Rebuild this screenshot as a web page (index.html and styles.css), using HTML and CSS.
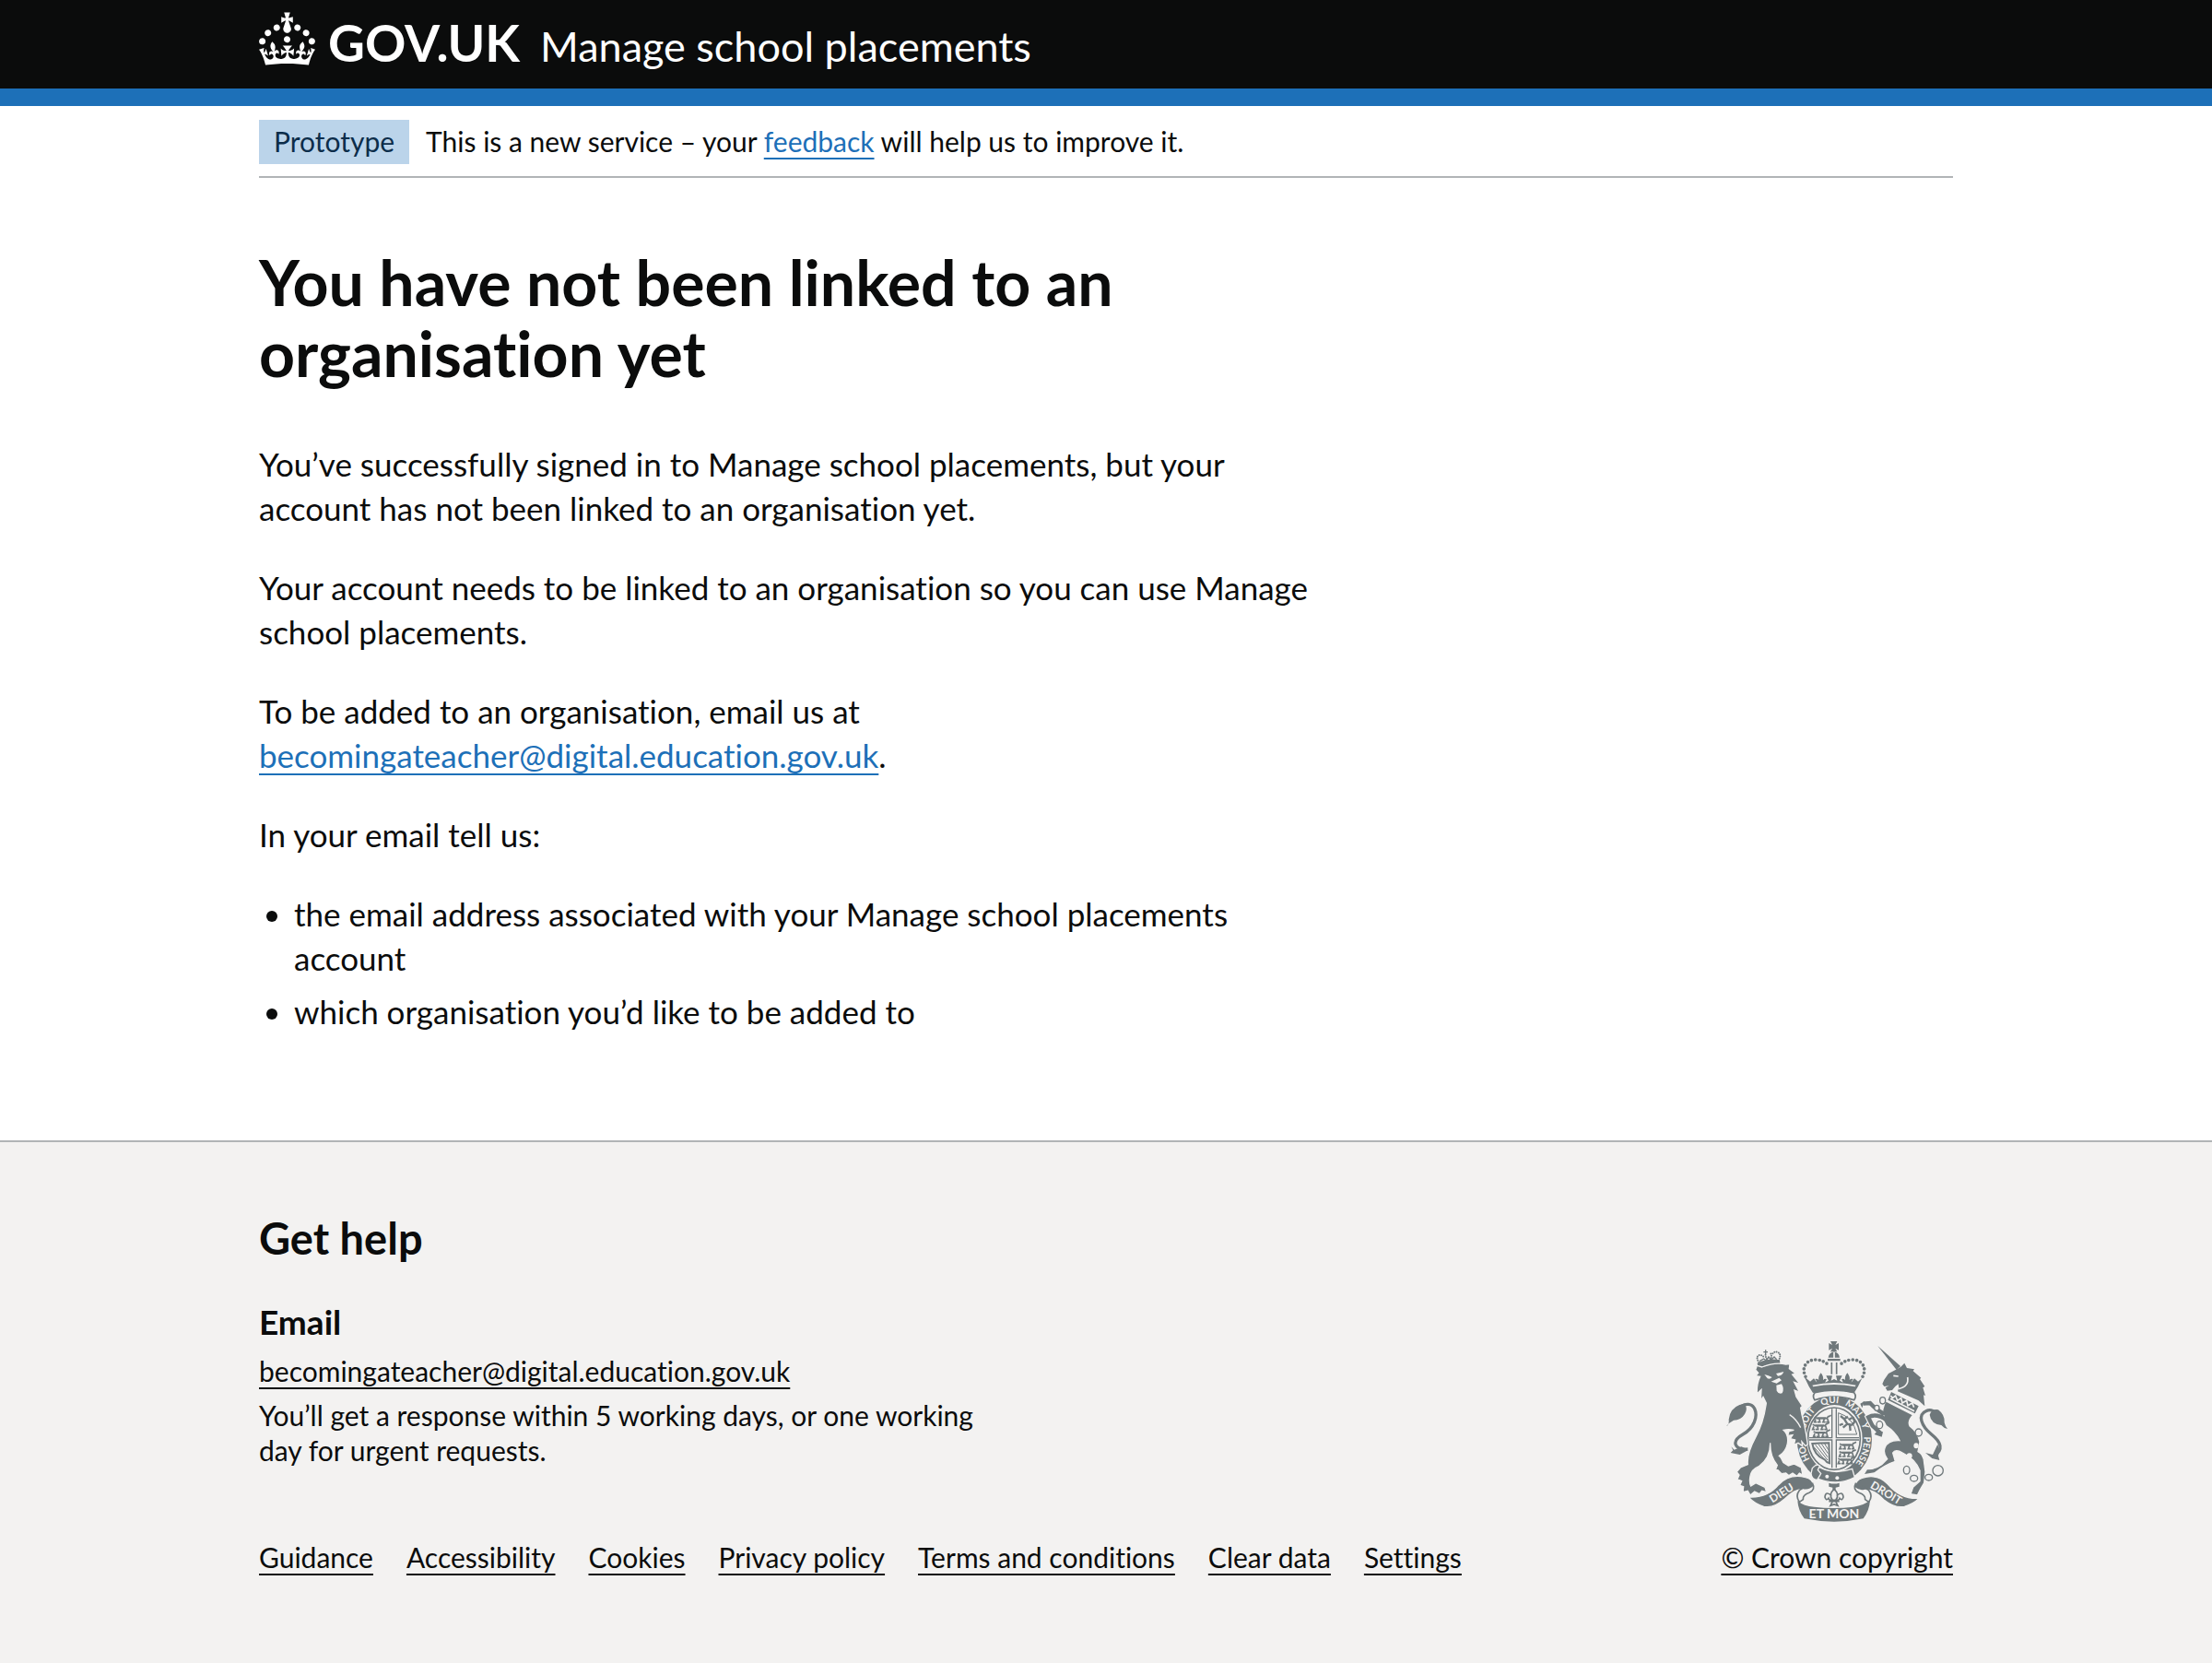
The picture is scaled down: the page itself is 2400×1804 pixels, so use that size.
FILE: index.html
```
<!DOCTYPE html>
<html lang="en">
<head>
  <meta charset="utf-8">
  <meta name="viewport" content="width=device-width, initial-scale=1">
  <title>You have not been linked to an organisation yet - Manage school placements</title>
  <link rel="stylesheet" href="styles.css">
</head>
<body>
  <header class="header">
    <div class="container header-row">
      <a class="logo" href="#">
        <svg class="crown" viewBox="0 0 32 30" aria-hidden="true">
          <path fill="currentColor" d="M22.6 10.4c-1 .4-2-.1-2.4-1-.4-.9.1-2 1-2.4.9-.4 2 .1 2.4 1s-.1 2-1 2.4m-5.9 6.7c-.9.4-2-.1-2.4-1-.4-.9.1-2 1-2.4.9-.4 2 .1 2.4 1s-.1 2-1 2.4m10.8-3.7c-1 .4-2-.1-2.4-1-.4-.9.1-2 1-2.4.9-.4 2 .1 2.4 1s0 2-1 2.4m3.3 4.8c-1 .4-2-.1-2.4-1-.4-.9.1-2 1-2.4.9-.4 2 .1 2.4 1s-.1 2-1 2.4M17 4.7l2.3 1.2V2.5l-2.3.7-.2-.2.9-3h-3.4l.9 3-.2.2c-.1.1-2.3-.7-2.3-.7v3.4L15 4.7c.1.1.1.2.2.2l-1.3 4c-.1.2-.1.4-.1.6 0 1.1.8 2 1.9 2.2h.7c1-.2 1.9-1.1 1.9-2.1 0-.2 0-.4-.1-.6l-1.3-4c-.1-.2 0-.2.1-.3m-7.6 5.7c.9.4 2-.1 2.4-1 .4-.9-.1-2-1-2.4-.9-.4-2 .1-2.4 1s0 2 1 2.4m-5 3c.9.4 2-.1 2.4-1 .4-.9-.1-2-1-2.4-.9-.4-2 .1-2.4 1s.1 2 1 2.4m-3.2 4.8c.9.4 2-.1 2.4-1 .4-.9-.1-2-1-2.4-.9-.4-2 .1-2.4 1s0 2 1 2.4m14.8 11c4.4 0 8.6.3 12.3.8 1.1-4.5 2.4-7 3.7-8.8l-2.5-.9c.2 1.3.3 1.9 0 2.7-.4-.4-.8-1.1-1.1-2.3l-1.2 4c.7-.5 1.3-.8 2-.9-1.1 2.5-2.6 3.1-3.5 3-1.1-.2-1.7-1.2-1.5-2.1.3-1.2 1.5-1.5 2.1-.1 1.1-2.3-.8-3-2-2.3 1.9-1.9 2.1-3.5.6-5.6-2.1 1.6-2.1 3.2-1.2 5.5-1.2-1.4-3.2-.6-2.5 1.6.9-1.4 2.1-.5 1.9.8-.2 1.1-1.7 2.1-3.5 1.9-2.7-.2-2.9-2.1-2.9-3.6.7-.1 1.9.5 2.9 1.9l.4-4.3c-1.1 1.1-2.1 1.4-3.2 1.4.4-1.2 2.1-3 2.1-3h-5.4s1.7 1.9 2.1 3c-1.1 0-2.1-.2-3.2-1.4l.4 4.3c1-1.4 2.2-2 2.9-1.9-.1 1.5-.2 3.4-2.9 3.6-1.9.2-3.4-.8-3.5-1.9-.2-1.3 1-2.2 1.9-.8.7-2.3-1.2-3-2.5-1.6.9-2.2.9-3.9-1.2-5.5-1.5 2-1.3 3.7.6 5.6-1.2-.7-3.1 0-2 2.3.6-1.4 1.8-1.1 2.1.1.2.9-.3 1.9-1.5 2.1-.9.2-2.4-.5-3.5-3 .6 0 1.2.3 2 .9l-1.2-4c-.3 1.1-.7 1.9-1.1 2.3-.3-.8-.2-1.4 0-2.7l-2.9.9C1.3 23 2.6 25.5 3.7 30c3.7-.5 7.9-.8 12.3-.8"/>
        </svg>
        <span class="logo-text">GOV.UK</span>
      </a>
      <a class="product" href="#">Manage school placements</a>
    </div>
  </header>

  <div class="container">
    <div class="phase-banner">
      <strong class="tag">Prototype</strong>
      <span>This is a new service – your <a class="link" href="#">feedback</a> will help us to improve it.</span>
    </div>
  </div>

  <main class="container main">
    <div class="content">
      <h1 class="heading">You have not been linked to an organisation yet</h1>
      <p>You’ve successfully signed in to Manage school placements, but your account has not been linked to an organisation yet.</p>
      <p>Your account needs to be linked to an organisation so you can use Manage school placements.</p>
      <p>To be added to an organisation, email us at <a class="link" href="mailto:becomingateacher@digital.education.gov.uk">becomingateacher@digital.education.gov.uk</a>.</p>
      <p>In your email tell us:</p>
      <ul class="bullets">
        <li>the email address associated with your Manage school placements account</li>
        <li>which organisation you’d like to be added to</li>
      </ul>
    </div>
  </main>

  <footer class="footer">
    <div class="container footer-row">
      <div class="footer-main">
        <h2 class="help-title">Get help</h2>
        <h3 class="help-subtitle">Email</h3>
        <ul class="help-list">
          <li><a href="mailto:becomingateacher@digital.education.gov.uk">becomingateacher@digital.education.gov.uk</a></li>
          <li>You’ll get a response within 5 working days, or one working day for urgent requests.</li>
        </ul>
        <nav class="footer-links" aria-label="Support links">
          <a href="#">Guidance</a>
          <a href="#">Accessibility</a>
          <a href="#">Cookies</a>
          <a href="#">Privacy policy</a>
          <a href="#">Terms and conditions</a>
          <a href="#">Clear data</a>
          <a href="#">Settings</a>
        </nav>
      </div>
      <a class="copyright" href="#">
        <svg class="arms" viewBox="42 42 720 594" aria-hidden="true">
          <defs>
            <path id="garter" d="M393 478A97 116 0 0 1 393 246A97 116 0 0 1 393 478"/>
            <g id="passant">
              <path class="line" stroke-width="5" d="M4 6l10 4h30l6-8M8 12L4 22h8M20 12l2 10h-8M36 12l-4 10h8M46 10l4 12h-8M50 4l8-4"/>
              <path class="line" stroke-width="6" d="M12 9h30"/>
            </g>
          </defs>

          <!-- royal crown -->
          <path class="ink" d="M381 45h22l-6 12 11-6v23l-11-6 6 11h-22l6-11-11 6V51l11 6z"/>
          <path class="ink" d="M374 98q3-17 19-19 15 2 18 19zM372 102h41v7h-41z"/>
          <path class="cut" stroke-width="5" d="M393 80v20"/>
          <path class="line" stroke-width="5" d="M385 114v38M401 114v38"/>
          <path class="beads" d="M300 160C284 128 306 104 334 105 352 106 366 113 376 124M486 160C502 128 480 104 452 105 434 106 420 113 410 124"/>
          <path class="ink" d="M302 165l13 11 12-10 10 13q-2-8-6-11 7-3 12 3-3-10 7-23 10 12 7 24 5-7 12-3-4 5-5 10l11-6-8-16h20l-4 16 10-5 10 5-4-16h20l-8 16 11 6q-1-5-5-10 7-4 12 3-3-12 7-24 10 13 7 23 5-6 12-3-4 3-6 11l10-13 12 10 13-11q-12 28-26 48-65-14-134 0-14-20-26-48z"/>
          <path class="paper" d="M322 188q70-16 142 0l-3 5q-68-14-136 0z"/>
          <path class="line" stroke-width="5" d="M330 212q63-15 128 0 9 12 0 24-65-22-128 0-9-12 0-24z"/>

          <!-- garter and shield -->
          <ellipse class="ink" cx="394" cy="364" rx="122" ry="140"/>
          <ellipse class="paper" cx="394" cy="362" rx="91" ry="110"/>
          <ellipse class="line" stroke-width="5" cx="393" cy="362" rx="85" ry="101"/>
          <path class="line" stroke-width="4" d="M386 265v94H312M400 265v94h74M386 457v-91H312M400 457v-91h74"/>
          <use href="#passant" x="325" y="286"/>
          <use href="#passant" x="319" y="310"/>
          <use href="#passant" x="322" y="333"/>
          <use href="#passant" x="407" y="373"/>
          <use href="#passant" x="406" y="398"/>
          <use href="#passant" x="402" y="421"/>
          <path class="line" stroke-width="7" d="M414 288l12 10 12-8M426 298l10 16 16 4M436 314l-14 12M444 318l2 18M452 318l8-12-6-14M440 300l12-6M410 318l12-4"/>
          <path class="line" stroke-width="3" d="M407 278q48 14 60 70h-60z"/>
          <path class="line" stroke-width="6" d="M322 378q24-2 54-2l2 66q-10-2-16-12-34-14-40-52z"/>
          <path class="line" stroke-width="3" d="M332 382l40 50M342 380l30 42M352 379l21 31M362 378l12 20M328 390l32 38"/>
          <g class="motto" font-size="30">
            <text><textPath href="#garter" startOffset="18%">HO</textPath></text>
            <text><textPath href="#garter" startOffset="35%">SOIT</textPath></text>
            <text><textPath href="#garter" startOffset="48%">QUI</textPath></text>
            <text><textPath href="#garter" startOffset="60%">MAL</textPath></text>
            <text><textPath href="#garter" startOffset="69%">Y</textPath></text>
            <text><textPath href="#garter" startOffset="81%">PENSE</textPath></text>
          </g>
          <path class="ink edge" d="M334 448q50 36 118 12l8 28q-60 32-132 0z"/>
          <path class="ink edge" d="M322 458q14-16 24-8l-6 14 10 12-12 20q-18 0-20-20z"/>
          <circle class="paper" cx="370" cy="485" r="6"/>
          <circle class="paper" cx="403" cy="490" r="6"/>

          <!-- lion -->
          <path class="ink" d="M146 133L143 116Q180 98 216 106L217 118Q180 118 146 133Z"/>
          <path class="beads small" d="M148 114Q136 94 150 90 160 90 166 98M178 108Q168 96 170 86M186 106Q192 92 186 84M212 108Q224 86 208 80 198 78 192 86"/>
          <path class="line" stroke-width="4" d="M150 110l14-8 8 6 8-12 8 10 10-10 8 8M163 80h14M170 73v14"/>
          <path class="ink edge" d="M137 138L142 124 158 129Q200 112 236 120L249 119 247 134 268 150 257 153 282 184 263 178 280 210 264 204 270 226 290 256 284 262 288 284Q296 312 302 348L307 380 300 386 288 372 290 386 276 376 262 382 266 366 250 362 258 350 242 352 246 338 262 334Q244 330 228 334 246 350 241 378 236 404 214 418 222 424 228 440L244 450 262 444 286 456 291 480 280 474 272 484 258 474 246 482 236 474 222 476 210 464 202 464 208 448Q184 420 185 376 186 424 148 452 124 462 120 484 116 504 122 516L138 506 168 520 173 536 158 532 150 542 134 534 120 546 112 532 96 536 98 518 86 514 92 500 78 494 84 480 76 470 88 456 112 446Q108 412 138 356 164 308 172 246L162 226 154 238 156 202 142 216Q140 186 152 160L138 158 146 148Z"/>
          <path class="paper" d="M166 153Q180 156 191 162 184 170 176 166ZM204 150L229 144Q224 158 210 158ZM188 176L214 164 222 172 206 182ZM205 188L222 184Q232 200 224 214 212 218 206 206Z"/>
          <path class="cut" stroke-width="4" d="M248 284Q270 298 284 326"/>
          <path class="line" stroke-width="10" d="M112 396C66 398 58 370 96 348 132 328 146 290 134 264 124 246 104 248 92 256"/>
          <path class="ink" d="M42 322Q52 316 50 300 54 256 100 248 114 262 102 282 90 302 66 302 50 310 42 322ZM58 388L64 400 56 408 86 414 112 400 92 388 68 398Z"/>

          <!-- unicorn -->
          <path class="ink" d="M535 60L609 126 596 138Z"/>
          <path class="ink" d="M586 142L610 128 622 116 630 132 654 136 650 142 676 164 672 168 688 192 682 196 690 222 684 220 688 256 668 238 600 208Q606 196 602 184 590 192 582 204L566 206 560 196 572 190 556 192 550 184 556 170 570 150Z"/>
          <path class="cut" stroke-width="5" d="M632 162Q638 192 602 200M586 157l16 2"/>
          <path class="ink" d="M579 210L668 256 656 280 568 236Z"/>
          <path class="cut" stroke-width="5" d="M577 222l6 8 10-8 6 16 12-8 4 16 14-8 4 16 14-8 6 14M576 232l78 40"/>
          <path class="ink edge" d="M562 240L650 285Q630 306 640 322 664 340 672 372L666 404Q684 412 686 440L690 470 686 506 672 530 664 546 642 542 650 520 672 500 672 466Q660 430 616 408 592 394 584 408L592 436Q560 446 524 474L488 480 500 460Q522 464 548 446L566 428Q552 410 558 392 568 366 606 368 592 340 562 320L552 300Q546 264 562 240Z"/>
          <path class="cut" stroke-width="20" d="M552 296Q530 278 504 292L518 320 540 340M548 278Q530 268 510 246L488 248"/>
          <path class="line" stroke-width="13" d="M562 300Q530 278 504 292L518 320 544 344M556 282Q530 268 510 246L488 248"/>
          <path class="ink" d="M534 336L552 340 548 356 524 348ZM492 240L484 262 478 248Z"/>
          <path class="line" stroke-width="10" d="M716 420C752 398 740 372 710 348 676 320 664 284 692 272 704 266 716 270 722 276"/>
          <path class="ink" d="M704 284Q712 264 732 268 754 284 752 310 754 320 762 330 750 328 742 318 708 314 704 284ZM730 380L736 400 732 418 736 432 712 426 690 408 714 414Z"/>
          <g class="rings">
            <ellipse cx="551" cy="238" rx="9" ry="11"/>
            <ellipse cx="532" cy="262" rx="8" ry="9"/>
            <ellipse cx="541" cy="317" rx="10" ry="12"/>
            <ellipse cx="668" cy="342" rx="11" ry="12"/>
            <ellipse cx="629" cy="464" rx="10" ry="13"/>
            <ellipse cx="653" cy="491" rx="12" ry="10"/>
            <ellipse cx="701" cy="488" rx="12" ry="10"/>
            <circle cx="731" cy="466" r="17"/>
          </g>
          <ellipse class="paper" cx="660" cy="385" rx="8" ry="9"/>
          <ellipse class="paper" cx="638" cy="418" rx="9" ry="9"/>

          <!-- pendant -->
          <path class="ink" d="M376 506q17 5 34 0v12l-12 3v8h-10v-8l-12-3z"/>
          <path class="line" stroke-width="5" d="M393 526q-20 18-5 36h10q15-18-5-36zM385 548q-20-18-22 4 4 14 12 4 2 8 12 6M401 548q20-18 22 4-4 14-12 4-2 8-12 6M376 566h34M387 568l-6 12 12-4 12 4-6-12"/>

          <!-- ribbon -->
          <path class="ink edge" d="M114 552Q176 556 212 512 248 474 300 488 322 492 328 516 312 532 294 528 270 522 232 558 196 590 164 583 134 574 114 552Z"/>
          <path class="ink edge" d="M670 556Q610 560 568 510 534 474 484 490 464 496 458 520 474 534 490 530 516 522 554 560 592 590 622 583 652 574 670 556Z"/>
          <path class="line" stroke-width="5" d="M322 506q12 22-10 32-22 8-20 22l-12 8Q266 548 280 530l22-14M464 506q-12 22 10 32 22 8 20 22l12 8Q520 548 506 530l-22-14"/>
          <path class="ink" d="M274 564q20 18 54 20 64 8 128 0 34-4 54-22-2 34-22 60-94 20-192 0-20-26-22-58z"/>
          <g class="motto" font-size="36">
            <text transform="translate(228 549) rotate(-32)">DIEU</text>
            <text x="393" y="622" font-size="42">ET MON</text>
            <text transform="translate(556 549) rotate(31)">DROIT</text>
          </g>
        </svg>
        <span class="copyright-text">© Crown copyright</span>
      </a>
    </div>
  </footer>
</body>
</html>
```
FILE: styles.css
```
:root {
  --text: #0b0c0c;
  --blue: #1d70b8;
  --footer-bg: #f3f2f1;
  --border: #b1b4b6;
  --arms: #6f787b;
}

* {
  box-sizing: border-box;
}

body {
  display: flex;
  flex-direction: column;
  min-height: 100vh;
  margin: 0;
  background: #fff;
  color: var(--text);
  font-family: Lato, "Liberation Sans", sans-serif;
  font-size: 35px;
  line-height: 48px;
  font-variant-ligatures: none;
}

a {
  color: inherit;
  text-decoration-thickness: 2px;
  text-underline-offset: 6px;
}

.container {
  width: 100%;
  max-width: 1878px;
  margin: 0 auto;
  padding: 0 20px;
}

.header {
  background: var(--text);
  border-bottom: 19px solid var(--blue);
  color: #fff;
}

.header-row {
  display: flex;
  align-items: flex-start;
  gap: 22px;
  padding-top: 13px;
  padding-bottom: 9px;
}

.header a {
  text-decoration: none;
}

.logo {
  display: flex;
  gap: 14px;
}

.crown {
  width: 61px;
  height: 58px;
}

.logo-text {
  font-size: 55px;
  font-weight: 700;
  line-height: 66px;
}

.product {
  font-size: 45px;
  line-height: 74px;
}

.phase-banner {
  display: flex;
  align-items: baseline;
  gap: 18px;
  padding: 15px 0 13px;
  border-bottom: 2px solid var(--border);
  font-size: 30px;
  line-height: 38px;
}

.tag {
  padding: 4px 16px 6px;
  background: #bbd4ea;
  color: #0c2d4a;
  font-weight: 400;
}

.link {
  color: var(--blue);
}

.main {
  flex-grow: 1;
  padding-top: 74px;
  padding-bottom: 68px;
}

.content {
  max-width: 1160px;
}

.heading {
  margin: 0 0 58px;
  font-size: 68px;
  font-weight: 700;
  line-height: 77px;
}

.content p {
  margin: 0 0 38px;
}

.bullets {
  margin: 0 0 38px;
  padding-left: 38px;
}

.bullets li {
  margin-bottom: 10px;
}

.footer {
  padding: 76px 0 96px;
  background: var(--footer-bg);
  border-top: 2px solid var(--border);
  font-size: 30px;
  line-height: 38px;
}

.footer-row {
  display: flex;
  align-items: flex-end;
  justify-content: space-between;
}

.help-title {
  margin: 0 0 38px;
  font-size: 47px;
  line-height: 57px;
}

.help-subtitle {
  margin: 0 0 10px;
  font-size: 37px;
  line-height: 48px;
}

.help-list {
  max-width: 800px;
  margin: 0 0 78px;
  padding: 0;
  list-style: none;
}

.help-list li + li {
  margin-top: 10px;
}

.footer-links {
  display: flex;
  flex-wrap: wrap;
  gap: 10px 36px;
}

.copyright {
  display: flex;
  flex-direction: column;
  align-items: center;
  gap: 18px;
  white-space: nowrap;
}

.arms {
  width: 240px;
  height: 198px;
}

.ink {
  fill: var(--arms);
}

.paper {
  fill: var(--footer-bg);
}

.edge {
  stroke: var(--footer-bg);
  stroke-width: 4px;
}

.line,
.beads,
.rings {
  fill: none;
  stroke: var(--arms);
}

.cut {
  fill: none;
  stroke: var(--footer-bg);
}

.beads {
  stroke-width: 11px;
  stroke-linecap: round;
  stroke-dasharray: 0 13;
}

.beads.small {
  stroke-width: 6px;
  stroke-dasharray: 0 7;
}

.rings {
  fill: var(--footer-bg);
  stroke-width: 4px;
}

.motto {
  fill: var(--footer-bg);
  font-weight: 700;
  text-anchor: middle;
}
```
